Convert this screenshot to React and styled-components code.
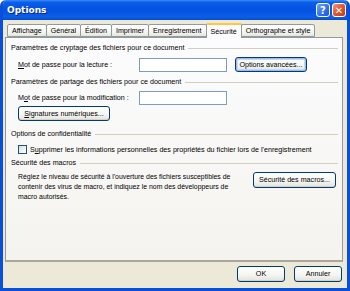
import React from 'react';
import styled, { createGlobalStyle } from 'styled-components';

const GlobalStyle = createGlobalStyle`
  html, body {
    margin: 0;
    padding: 0;
    background: #ffffff;
  }
  body {
    font-family: "Liberation Sans", Arial, sans-serif;
    font-size: 7.15px;
    color: #000;
  }
`;

const Window = styled.div`
  width: 350px;
  height: 291px;
  box-sizing: border-box;
  display: flex;
  flex-direction: column;
  background: #ece9d8;
  border: 3px solid #0a4fd8;
  border-top: none;
  border-radius: 6px 6px 0 0;
  overflow: hidden;
`;

const TitleBar = styled.div`
  height: 20px;
  margin: 0 -3px;
  padding: 0 4px 0 7px;
  display: flex;
  align-items: center;
  justify-content: space-between;
  background: linear-gradient(180deg, #3a8cf8 0%, #0a5ee8 12%, #0551e0 50%, #0a5fe8 85%, #0a4bc8 100%);
  color: #fff;
`;

const Title = styled.span`
  font-family: "DejaVu Sans", Verdana, sans-serif;
  font-weight: bold;
  font-size: 9px;
  text-shadow: 1px 1px 0 #0a2b8a;
`;

const TitleButtons = styled.div`
  display: flex;
  gap: 2px;
`;

const TitleButton = styled.div`
  width: 14px;
  height: 14px;
  box-sizing: border-box;
  border: 1px solid #fff;
  border-radius: 3px;
  display: flex;
  align-items: center;
  justify-content: center;
  font-family: "DejaVu Sans", sans-serif;
  font-weight: bold;
  font-size: 10px;
  color: #fff;
  background: ${p => (p.$close
    ? 'linear-gradient(135deg, #f19a80 0%, #e0552e 50%, #c63a14 100%)'
    : 'linear-gradient(135deg, #6fa4f8 0%, #2f6fe8 60%, #1f58d8 100%)')};
`;

const Body = styled.div`
  flex: 1;
  display: flex;
  flex-direction: column;
  padding: 3px 4px 0 2px;
`;

const TabRow = styled.div`
  display: flex;
  align-items: flex-end;
  height: 14px;
  padding-left: 2px;
  position: relative;
  z-index: 1;
`;

const Tab = styled.div`
  box-sizing: border-box;
  height: ${p => (p.$active ? '15px' : '13px')};
  margin-bottom: ${p => (p.$active ? '-1px' : '0')};
  padding: 0 4px;
  display: flex;
  align-items: center;
  border: 1px solid #919b9c;
  border-bottom: ${p => (p.$active ? 'none' : '1px solid #919b9c')};
  border-top: ${p => (p.$active ? '2px solid #ffc83c' : '1px solid #919b9c')};
  border-radius: 2px 2px 0 0;
  margin-right: -1px;
  background: ${p => (p.$active ? '#fcfcfe' : 'linear-gradient(180deg, #ffffff 0%, #f3f3ef 70%, #e6e4dc 100%)')};
  white-space: nowrap;
`;

const Panel = styled.div`
  height: 225px;
  box-sizing: border-box;
  border: 1px solid #919b9c;
  border-right-color: #9a9a92;
  border-bottom: 2px solid #aca899;
  background: linear-gradient(180deg, #fcfcfe 0%, #f4f3ee 100%);
  padding: 5px 4px 0 5px;
  display: flex;
  flex-direction: column;
`;

const SectionHeader = styled.div`
  display: flex;
  align-items: center;
  height: 10px;
  margin-top: ${p => p.$top || 0}px;
  &::after {
    content: '';
    flex: 1;
    height: 1px;
    margin-left: 4px;
    background: #d0d0bf;
  }
`;

const Row = styled.div`
  display: flex;
  align-items: center;
  padding-left: ${p => p.$indent || 7}px;
  margin-top: ${p => p.$top || 0}px;
`;

const Label = styled.span`
  width: ${p => p.$width || 'auto'}px;
  flex-shrink: 0;
`;

const Field = styled.div`
  width: 88px;
  height: 14px;
  box-sizing: border-box;
  border: 1px solid #7f9db9;
  background: #fff;
`;

const Button = styled.div`
  box-sizing: border-box;
  height: ${p => p.$h || 15}px;
  width: ${p => p.$w}px;
  margin-left: ${p => p.$left || 0}px;
  border: 1px solid #003c74;
  border-radius: 3px;
  display: flex;
  align-items: center;
  justify-content: center;
  background: linear-gradient(180deg, #ffffff 0%, #f4f4f0 60%, #e3e2da 100%);
  box-shadow: ${p => (p.$focus
    ? 'inset 0 0 0 1px #9dbaf0, inset 0 0 0 2px #c6d8f8'
    : 'inset 0 -1px 0 #d6d0c5')};
  white-space: nowrap;
  flex-shrink: 0;
`;

const Check = styled.div`
  width: 9px;
  height: 9px;
  box-sizing: border-box;
  border: 1px solid #1c5180;
  background: linear-gradient(135deg, #dcdcd6 0%, #fff 100%);
  margin-right: 3px;
  flex-shrink: 0;
`;

const MacroRow = styled.div`
  display: flex;
  align-items: flex-start;
  justify-content: space-between;
  padding: 0 2px 0 7px;
  margin-top: 4px;
`;

const MacroText = styled.p`
  margin: 0;
  line-height: 10px;
  white-space: nowrap;
  font-size: 6.9px;
`;

const Footer = styled.div`
  height: 24px;
  display: flex;
  align-items: center;
  justify-content: flex-end;
  gap: 9px;
  padding-right: 1px;
`;

const U = styled.span`
  text-decoration: underline;
`;

export default function App() {
  const tabs = ['Affichage', 'Général', 'Édition', 'Imprimer', 'Enregistrement', 'Sécurité', 'Orthographe et style'];
  return (
    <>
      <GlobalStyle />
      <Window>
        <TitleBar>
          <Title>Options</Title>
          <TitleButtons>
            <TitleButton>?</TitleButton>
            <TitleButton $close>✕</TitleButton>
          </TitleButtons>
        </TitleBar>
        <Body>
          <TabRow>
            {tabs.map(t => (
              <Tab key={t} $active={t === 'Sécurité'}>{t}</Tab>
            ))}
          </TabRow>
          <Panel>
            <SectionHeader>Paramètres de cryptage des fichiers pour ce document</SectionHeader>
            <Row $top={4}>
              <Label $width={121}><U>M</U>ot de passe pour la lecture :</Label>
              <Field />
              <Button $w={72} $left={8} $focus>Options avancées...</Button>
            </Row>
            <SectionHeader $top={5}>Paramètres de partage des fichiers pour ce document</SectionHeader>
            <Row $top={4}>
              <Label $width={121}>M<U>o</U>t de passe pour la modification :</Label>
              <Field />
            </Row>
            <Row $top={1}>
              <Button $w={92} $h={15}><U>S</U>ignatures numériques...</Button>
            </Row>
            <SectionHeader $top={8}>Options de confidentialité</SectionHeader>
            <Row $top={6}>
              <Check />
              <span>S<U>u</U>pprimer les informations personnelles des propriétés du fichier lors de l'enregistrement</span>
            </Row>
            <SectionHeader $top={4}>Sécurité des macros</SectionHeader>
            <MacroRow>
              <MacroText>
                Réglez le niveau de sécurité à l'ouverture des fichiers susceptibles de<br />
                contenir des virus de macro, et indiquez le nom des développeurs de<br />
                macro autorisés.
              </MacroText>
              <Button $w={83} $h={16}>Sécurité des macros...</Button>
            </MacroRow>
          </Panel>
          <Footer>
            <Button $w={48} $h={16}>OK</Button>
            <Button $w={48} $h={16}>Annuler</Button>
          </Footer>
        </Body>
      </Window>
    </>
  );
}
